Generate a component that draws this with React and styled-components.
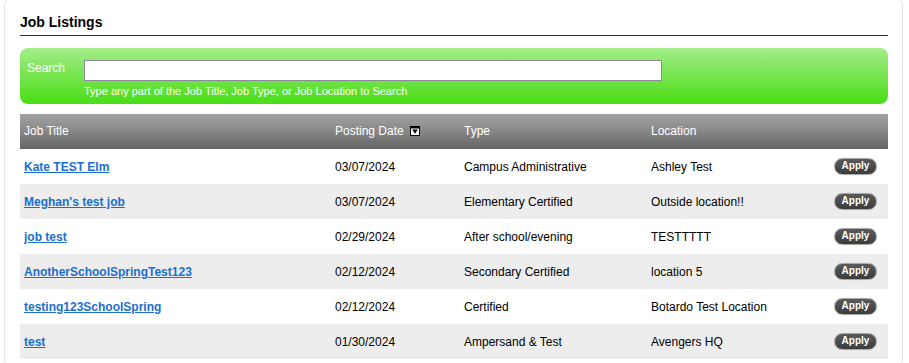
import React from 'react';
import styled, { createGlobalStyle } from 'styled-components';

const jobs = [
  { title: 'Kate TEST Elm', date: '03/07/2024', type: 'Campus Administrative', location: 'Ashley Test' },
  { title: "Meghan's test job", date: '03/07/2024', type: 'Elementary Certified', location: 'Outside location!!' },
  { title: 'job test', date: '02/29/2024', type: 'After school/evening', location: 'TESTTTTT' },
  { title: 'AnotherSchoolSpringTest123', date: '02/12/2024', type: 'Secondary Certified', location: 'location 5' },
  { title: 'testing123SchoolSpring', date: '02/12/2024', type: 'Certified', location: 'Botardo Test Location' },
  { title: 'test', date: '01/30/2024', type: 'Ampersand & Test', location: 'Avengers HQ' },
];

const GlobalStyle = createGlobalStyle`
  html, body {
    margin: 0;
    padding: 0;
    background: #fff;
    overflow: hidden;
  }
  body {
    font-family: 'Liberation Sans', Arial, sans-serif;
    font-size: 12px;
    color: #000;
  }
`;

const App = () => (
  <>
    <GlobalStyle />
    <Panel>
      <Title>Job Listings</Title>
      <SearchBox>
        <SearchLabel>Search</SearchLabel>
        <SearchField>
          <SearchInput type="text" />
          <Hint>Type any part of the Job Title, Job Type, or Job Location to Search</Hint>
        </SearchField>
      </SearchBox>
      <Table>
        <HeaderRow>
          <HeadCell>Job Title</HeadCell>
          <HeadCell>
            Posting Date
            <SortIcon viewBox="0 0 10 10">
              <rect x="0.5" y="0.5" width="9" height="9" fill="#fff" stroke="#000" />
              <rect x="1" y="1" width="8" height="1.5" fill="#000" />
              <path d="M2.2 3.4 L7.8 3.4 L5 7.8 Z" fill="#000" />
            </SortIcon>
          </HeadCell>
          <HeadCell>Type</HeadCell>
          <HeadCell>Location</HeadCell>
          <HeadCell />
        </HeaderRow>
        {jobs.map((job, i) => (
          <Row key={i} $striped={i % 2 === 1}>
            <Cell>
              <JobLink href="#">{job.title}</JobLink>
            </Cell>
            <Cell>{job.date}</Cell>
            <Cell>{job.type}</Cell>
            <Cell>{job.location}</Cell>
            <ApplyCell>
              <ApplyButton type="button">Apply</ApplyButton>
            </ApplyCell>
          </Row>
        ))}
      </Table>
    </Panel>
  </>
);

export default App;

const Panel = styled.div`
  margin: -3px 0 0 4px;
  width: 899px;
  height: 372px;
  box-sizing: border-box;
  border: 1px solid #e3e3e3;
  border-radius: 9px;
  padding: 14px 14px 0 15px;
`;

const Title = styled.h2`
  margin: 0;
  font-size: 14px;
  font-weight: bold;
  line-height: 16px;
  padding: 2px 0 5px;
  border-bottom: 1px solid #1f3b33;
`;

const SearchBox = styled.div`
  margin-top: 12px;
  height: 56px;
  box-sizing: border-box;
  border-radius: 8px;
  background: linear-gradient(to bottom, #a3ee88 0%, #7fe65a 40%, #4ade14 100%);
  display: flex;
  padding-top: 12px;
`;

const SearchLabel = styled.div`
  width: 64px;
  padding-left: 7px;
  box-sizing: border-box;
  color: #fff;
  font-size: 12px;
  line-height: 14px;
  padding-top: 1px;
`;

const SearchField = styled.div`
  display: flex;
  flex-direction: column;
`;

const SearchInput = styled.input`
  width: 578px;
  height: 21px;
  box-sizing: border-box;
  border: 1px solid #8c8a9c;
  background: #fff;
  margin: 0;
  padding: 2px 4px;
  font-family: 'Liberation Sans', Arial, sans-serif;
`;

const Hint = styled.div`
  margin-top: 4px;
  color: #fff;
  font-size: 11px;
  line-height: 13px;
`;

const Table = styled.div`
  margin-top: 10px;
`;

const columns = '311px 129px 187px 1fr 80px';

const HeaderRow = styled.div`
  display: grid;
  grid-template-columns: ${columns};
  height: 35px;
  align-items: center;
  background: linear-gradient(to bottom, #a2a2a2 0%, #8a8a8a 45%, #646464 100%);
`;

const HeadCell = styled.div`
  color: #fff;
  padding-left: 4px;
  font-size: 12px;
  display: flex;
  align-items: center;
  padding-bottom: 1px;
`;

const SortIcon = styled.svg`
  width: 10px;
  height: 10px;
  margin-left: 6px;
`;

const Row = styled.div`
  display: grid;
  grid-template-columns: ${columns};
  height: 35px;
  align-items: center;
  background: ${(props) => (props.$striped ? '#ededed' : '#fff')};
`;

const Cell = styled.div`
  padding-left: 4px;
  font-size: 12px;
  white-space: nowrap;
`;

const JobLink = styled.a`
  color: #1a6fd0;
  font-weight: bold;
  text-decoration: underline;
`;

const ApplyCell = styled.div`
  display: flex;
  justify-content: flex-end;
  padding-right: 11px;
`;

const ApplyButton = styled.button`
  width: 43px;
  height: 17px;
  box-sizing: border-box;
  padding: 0 0 1px;
  border: 1px solid #a9a9a9;
  border-radius: 9px;
  background: linear-gradient(to bottom, #5a5a5a, #3c3c3c);
  box-shadow: 0 0 1px #bbb;
  color: #fff;
  font-family: 'Liberation Sans', Arial, sans-serif;
  font-size: 10px;
  font-weight: bold;
  line-height: 14px;
  cursor: pointer;
`;
